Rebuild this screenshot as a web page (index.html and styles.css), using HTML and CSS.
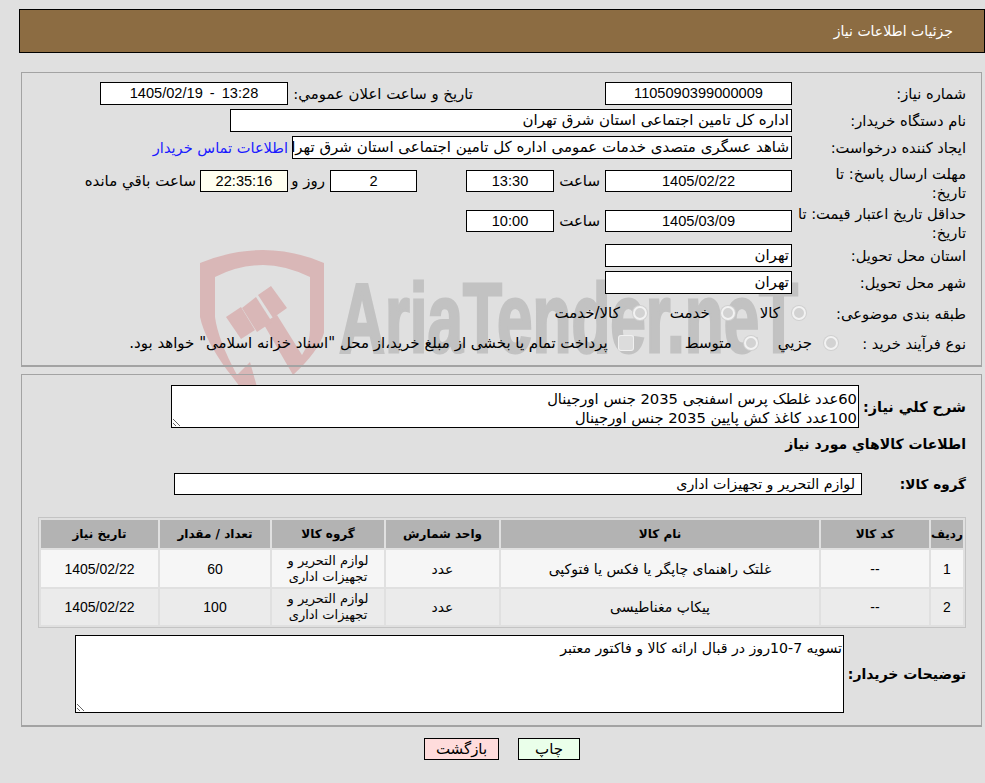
FILE: index.html
```html
<!DOCTYPE html>
<html lang="fa" dir="rtl">
<head>
<meta charset="utf-8">
<title>جزئیات اطلاعات نیاز</title>
<link rel="stylesheet" href="styles.css">
</head>
<body>
<div class="page">
  <div class="watermark" aria-hidden="true">
    <svg class="wm-shield" viewBox="195 245 135 145">
      <path d="M200 263 Q232 250 263 250 Q294 250 324 263 L324 333 Q318 352 293 375 L263 323 L277 315 L302 355 Q310 342 310 330 L310 277 Q285 265 263 265 Q238 265 215 277 L215 317 Q218 340 237 375 L232 380 L250 362 L257 387 L240 387 Q235 380 227 370 Q205 340 200 317 Z"/>
      <path d="M226 317 L241 307 L255 330 L241 339 Z"/>
      <path d="M242 308 L256 297 L272 322 L257 332 Z"/>
      <path d="M258 295 L271 286 L287 308 L273 318 Z"/>
    </svg>
    <span class="wm-text">AriaTender.neT</span>
  </div>

  <header class="title-bar">جزئیات اطلاعات نیاز</header>

  <section class="panel panel-info">
    <div class="row h23">
      <div class="lbl">شماره نیاز:</div>
      <div class="box w187 num">1105090399000009</div>
      <div class="lbl-mid">تاریخ و ساعت اعلان عمومي:</div>
      <div class="box w188 num stamp" dir="ltr">1405/02/19 - 13:28</div>
    </div>
    <div class="row h23 mt4">
      <div class="lbl">نام دستگاه خریدار:</div>
      <div class="box w562 txt">اداره کل تامین اجتماعی استان شرق تهران</div>
    </div>
    <div class="row h23 mt4">
      <div class="lbl">ایجاد کننده درخواست:</div>
      <div class="box w500 txt">شاهد عسگری متصدی خدمات عمومی اداره کل تامین اجتماعی استان شرق تهران</div>
      <a class="contact" href="#">اطلاعات تماس خریدار</a>
    </div>
    <div class="row h36 mt4">
      <div class="lbl lbl-two">مهلت ارسال پاسخ: تا<br>تاریخ:</div>
      <div class="box w187 h22 num">1405/02/22</div>
      <div class="lbl-hour">ساعت</div>
      <div class="box w88 h22 num">13:30</div>
      <div class="box w87 h22 num ms49">2</div>
      <div class="lbl-day">روز و</div>
      <div class="box w88 h22 num timer">22:35:16</div>
      <div class="lbl-left">ساعت باقي مانده</div>
    </div>
    <div class="row h36 mt4">
      <div class="lbl lbl-two">حداقل تاریخ اعتبار قیمت: تا<br>تاریخ:</div>
      <div class="box w187 h22 num">1405/03/09</div>
      <div class="lbl-hour">ساعت</div>
      <div class="box w88 h22 num">10:00</div>
    </div>
    <div class="row h23 mt5">
      <div class="lbl">استان محل تحویل:</div>
      <div class="box w187 txt">تهران</div>
    </div>
    <div class="row h23 mt4">
      <div class="lbl">شهر محل تحویل:</div>
      <div class="box w187 txt">تهران</div>
    </div>
    <div class="row h26 mt6">
      <div class="lbl lbl-subject">طبقه بندی موضوعی:</div>
      <span class="radio"></span><span class="opt o-kala">کالا</span>
      <span class="radio r-second"></span><span class="opt o-khedmat">خدمت</span>
      <span class="radio r-third"></span><span class="opt o-both">کالا/خدمت</span>
    </div>
    <div class="row h26 mt4">
      <div class="lbl lbl-proc">نوع فرآیند خرید :</div>
      <span class="radio"></span><span class="opt o-jozi">جزيي</span>
      <span class="radio r-mid"></span><span class="opt o-mid">متوسط</span>
      <span class="check"></span><span class="opt o-pay">پرداخت تمام یا بخشی از مبلغ خرید،از محل "اسناد خزانه اسلامی" خواهد بود.</span>
    </div>
  </section>

  <section class="panel panel-items">
    <div class="desc-row">
      <div class="lbl-bold lbl-desc">شرح کلي نیاز:</div>
      <textarea class="area area-desc" readonly>60عدد غلطک پرس اسفنجی 2035 جنس اورجینال
100عدد کاغذ کش پایین 2035 جنس اورجینال</textarea>
    </div>
    <h2 class="section-title">اطلاعات کالاهاي مورد نیاز</h2>
    <div class="group-row">
      <div class="lbl-bold lbl-group">گروه کالا:</div>
      <div class="box w688 group-box">لوازم التحریر و تجهیزات اداری</div>
    </div>
    <table class="items">
      <colgroup>
        <col class="c1"><col class="c2"><col class="c3"><col class="c4"><col class="c5"><col class="c6"><col class="c7">
      </colgroup>
      <thead>
        <tr><th>ردیف</th><th>کد کالا</th><th>نام کالا</th><th>واحد شمارش</th><th>گروه کالا</th><th>تعداد / مقدار</th><th>تاریخ نیاز</th></tr>
      </thead>
      <tbody>
        <tr><td class="num">1</td><td class="num">--</td><td>غلتک راهنمای چاپگر یا فکس یا فتوکپی</td><td>عدد</td><td class="cell-group">لوازم التحریر و تجهیزات اداری</td><td class="num">60</td><td class="num">1405/02/22</td></tr>
        <tr><td class="num">2</td><td class="num">--</td><td>پیکاپ مغناطیسی</td><td>عدد</td><td class="cell-group">لوازم التحریر و تجهیزات اداری</td><td class="num">100</td><td class="num">1405/02/22</td></tr>
      </tbody>
    </table>
    <div class="notes-row">
      <div class="lbl-bold lbl-notes">توضیحات خریدار:</div>
      <textarea class="area area-notes" readonly>تسویه 7-10روز در قبال ارائه کالا و فاکتور معتبر</textarea>
    </div>
  </section>

  <div class="actions">
    <button class="btn btn-print" type="button">چاپ</button>
    <button class="btn btn-back" type="button">بازگشت</button>
  </div>
</div>
</body>
</html>
```
FILE: styles.css
```css
* { box-sizing: border-box; }
html, body { margin: 0; padding: 0; }
body {
  background: #e0e0e0;
  color: #000;
  font-family: "DejaVu Sans", "Liberation Sans", sans-serif;
  font-size: 15px;
  height: 783px;
  overflow: hidden;
}
.page { position: relative; height: 783px; padding: 9px 0 0 19px; }

.watermark { position: absolute; inset: 0; z-index: 0; overflow: hidden; }
.wm-shield { position: absolute; left: 195px; top: 245px; width: 135px; height: 145px; fill: #d9b7b7; }
.wm-text {
  position: absolute;
  left: 339px;
  top: 243px;
  direction: ltr;
  font-family: "Liberation Sans", sans-serif;
  font-weight: 700;
  font-size: 98px;
  line-height: 150px;
  color: #c2c2c2;
  -webkit-text-stroke: 3px #c2c2c2;
  white-space: nowrap;
  transform: scaleX(0.65);
  transform-origin: left top;
}

.title-bar, .panel, .actions { position: relative; z-index: 1; }

.title-bar {
  height: 44px;
  width: 966px;
  background: #8c6c42;
  border: 1px solid #000;
  color: #fff;
  font-size: 14px;
  line-height: 42px;
  padding-right: 31px;
}

.panel { border: 1px solid #a3a3a3; border-width: 1px 1px 2px 1px; width: 961px; margin-right: 3px; padding-right: 15px; }
.panel-info { height: 295px; margin-top: 19px; padding-top: 9px; }
.panel-items { height: 353px; margin-top: 7px; padding-top: 10px; }

.row { display: flex; align-items: center; }
.h23 { height: 23px; }
.h26 { height: 26px; }
.h36 { height: 36px; }
.mt4 { margin-top: 4px; }
.mt5 { margin-top: 5px; }
.mt6 { margin-top: 6px; }

.lbl { width: 174px; flex: none; line-height: 19px; white-space: nowrap; font-size: 14.7px; }
.lbl-two { padding-top: 3px; }
.lbl-subject { width: 160px; }
.box {
  flex: none;
  height: 23px;
  background: #fff;
  border: 1px solid #000;
  line-height: 21px;
  white-space: nowrap;
  overflow: hidden;
}
.h22 { height: 22px; line-height: 20px; }
.w187 { width: 187px; }
.w188 { width: 188px; }
.w88 { width: 88px; }
.w87 { width: 87px; }
.w500 { width: 500px; }
.w562 { width: 562px; }
.w688 { width: 688px; }
.num { font-family: "Liberation Sans", sans-serif; font-size: 14.6px; text-align: center; }
.stamp { word-spacing: 3px; }
.txt { padding-right: 2px; }
.timer { background: #fffff0; }
.ms49 { margin-right: 49px; }

.lbl-mid { width: 317px; flex: none; padding-right: 132px; white-space: nowrap; font-size: 14.9px; }
.contact { color: #1a1aff; text-decoration: none; margin-right: 4px; white-space: nowrap; font-size: 14.6px; }
.lbl-hour { width: 51px; flex: none; padding-right: 5px; }
.lbl-day { width: 42px; flex: none; padding-right: 5px; }
.lbl-left { margin-right: 4px; white-space: nowrap; }

.radio {
  flex: none;
  width: 14px;
  height: 14px;
  border-radius: 50%;
  background: #d2d2d2;
  border: 2px solid #f2f2f2;
  box-shadow: 0 0 0 1px #d0d0d0;
}
.check {
  flex: none;
  width: 14px;
  height: 14px;
  margin-right: 52px;
  border-radius: 2px;
  background: #dcdcdc;
  box-shadow: 0 0 0 1px #f0f0f0;
}
.opt { white-space: nowrap; }
.o-kala { margin-right: 12px; }
.r-second { margin-right: 25px; }
.o-khedmat { margin-right: 11px; }
.r-third { margin-right: 23px; }
.o-both { margin-right: 13px; }
.lbl-proc { width: 128px; }
.o-jozi { margin-right: 12px; }
.r-mid { margin-right: 20px; }
.o-mid { margin-right: 12px; }
.o-pay { margin-right: 11px; }

.lbl-bold { font-weight: 700; flex: none; white-space: nowrap; font-size: 14px; }
.desc-row { display: flex; align-items: center; height: 43px; }
.lbl-desc { width: 107px; font-size: 14.4px; }
.area {
  display: block;
  flex: none;
  background: #fff;
  border: 1px solid #000;
  border-radius: 0;
  margin: 0;
  padding: 3px 1px 0 0;
  font: inherit;
  line-height: 19px;
  color: #000;
  outline: none;
  overflow: hidden;
  resize: both;
}
.area-desc { width: 688px; height: 43px; font-size: 14.75px; }
.section-title { margin: 3px 0 0; font-size: 14px; font-weight: 700; line-height: 26px; height: 26px; }
.group-row { display: flex; align-items: center; height: 22px; margin-top: 16px; }
.lbl-group { width: 104px; font-size: 13.6px; }
.group-box { height: 22px; line-height: 20px; font-size: 14.2px; padding-right: 6px; }

.items {
  display: table;
  margin: 22px 0 0 0;
  width: 928px;
  border-collapse: separate;
  border-spacing: 2px;
  border: 1px solid #c4c4c4;
  table-layout: fixed;
  text-align: center;
}
.c1 { width: 32px; }
.c2 { width: 108px; }
.c3 { width: 318px; }
.c4 { width: 113px; }
.c5 { width: 112px; }
.c6 { width: 110px; }
.c7 { width: 117px; }
.items th { background: #b3b3b3; height: 28px; padding: 0; font-size: 12px; font-weight: 700; }
.items td { height: 37px; padding: 0 2px; line-height: 16px; font-size: 14px; }
.items tbody tr:nth-child(2) td { height: 36px; }
.items td.cell-group { font-size: 13px; }
.items td.num { font-size: 14px; }
.items tbody tr:nth-child(1) td { background: #f6f6f6; }
.items tbody tr:nth-child(2) td { background: #ebebeb; }

.notes-row { display: flex; align-items: center; height: 78px; margin-top: 7px; }
.lbl-notes { width: 122px; }
.area-notes { width: 769px; height: 78px; font-size: 14.15px; }

.actions { display: flex; justify-content: center; gap: 19px; margin-top: 11px; }
.btn {
  height: 22px;
  padding: 0;
  border: 1px solid #000;
  border-radius: 0;
  font: inherit;
  color: #000;
}
.btn-back { width: 75px; background: #ffdcdc; }
.btn-print { width: 62px; background: #eaffea; }
```
